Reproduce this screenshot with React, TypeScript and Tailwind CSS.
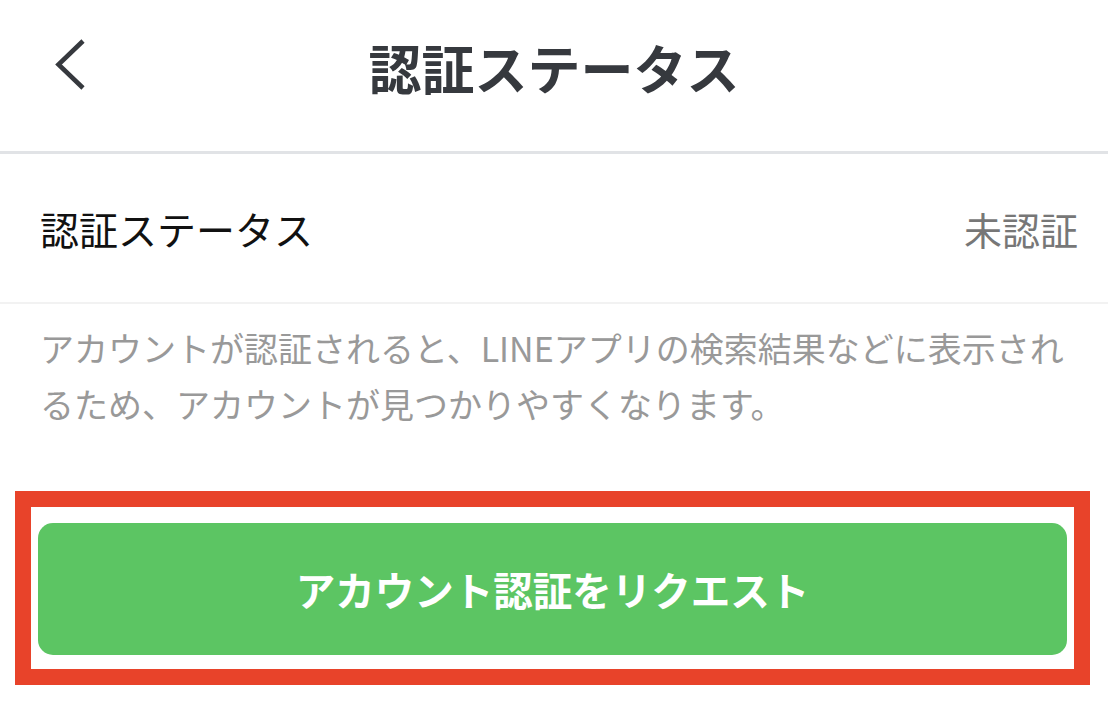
export default function App() {
  return (
    <div className="w-[1108px] h-[724px] bg-white overflow-hidden font-['Noto_Sans_CJK_JP','Noto_Sans',sans-serif]">
      {/* header */}
      <div className="relative h-[151px] pt-[41px]">
        <svg
          className="absolute left-[54px] top-[38px]"
          width="34"
          height="54"
          viewBox="0 0 34 54"
          fill="none"
        >
          <path d="M29 3 L4.5 26.5 L29 50" stroke="#36393e" strokeWidth="4.6" />
        </svg>
        <h1 className="text-center text-[53px] leading-[52px] font-bold text-[#36393e]">
          認証ステータス
        </h1>
      </div>
      <div className="h-[3px] bg-[#e1e3e6]" />

      {/* status row */}
      <div className="h-[148px] flex items-center justify-between pl-[40px] pr-[30px]">
        <span className="text-[39px] text-[#111111]">認証ステータス</span>
        <span className="text-[38px] text-[#777777]">未認証</span>
      </div>
      <div className="h-[2px] bg-[#f2f2f2]" />

      {/* description */}
      <p className="px-[40px] pt-[16px] text-[34px] leading-[56px] text-[#999999]">
        アカウントが認証されると、LINEアプリの検索結果などに表示され
        <br />
        るため、アカウントが見つかりやすくなります。
      </p>

      {/* highlighted button */}
      <div className="mt-[59px] ml-[15px] mr-[18px] border-[16px] border-[#e8432a] px-[7px] pt-[16px] pb-[14px]">
        <button className="w-full h-[132px] rounded-[15px] bg-[#5cc563] text-white text-[39.5px] font-bold">
          アカウント認証をリクエスト
        </button>
      </div>
    </div>
  );
}
